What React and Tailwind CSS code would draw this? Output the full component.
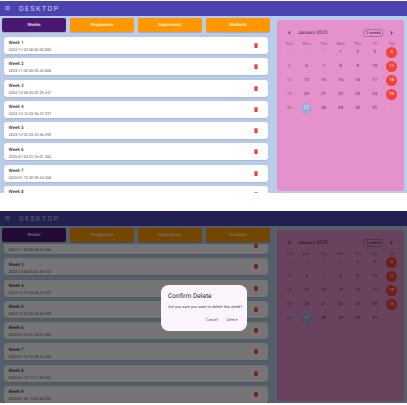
const WEEKS = [
  ["Week 1", "2024-11-23 00:00:00.000"],
  ["Week 2", "2024-11-30 00:55:44.806"],
  ["Week 3", "2024-12-08 05:03:29.447"],
  ["Week 4", "2024-12-15 03:36:47.337"],
  ["Week 5", "2024-12-22 03:25:56.592"],
  ["Week 6", "2025-01-04 01:34:01.584"],
  ["Week 7", "2025-01-13 20:39:44.268"],
  ["Week 8", "2025-01-19 17:11:56.951"],
  ["Week 9", "2025-01-26 19:02:28.322"],
];
const TABS = ["Weeks", "Programme", "Supervisors", "Students"];
const DAY_NAMES = ["Sun", "Mon", "Tue", "Wed", "Thu", "Fri", "Sat"];
const DAYS = [29, 30, 31, ...Array.from({ length: 31 }, (_, i) => i + 1), 1];

function Trash() {
  return (
    <svg viewBox="5 3 14 18" className="h-[5px] w-[4px] shrink-0 fill-[#f44336]">
      <path d="M6 19c0 1.1.9 2 2 2h8c1.100 0 2-.9 2-2V7H6v12zM19 4h-3.500l-1-1h-5l-1 1H5v2h14V4z" />
    </svg>
  );
}

function Chevron({ right }) {
  return (
    <svg viewBox="6 5 12 14" className={`h-[3.500px] w-[3px] fill-[#30202d] ${right ? "rotate-180" : ""}`}>
      <path d="M15.410 7.410 14 6l-6 6 6 6 1.410-1.410L10.830 12z" stroke="#30202d" />
    </svg>
  );
}

function Day({ value, index }) {
  const col = index % 7;
  const outside = index < 3 || index > 33;
  let tone = "text-[#4f3549]";
  if (outside) tone = "text-[#cf8cbf]";
  else if (col === 6) tone = "bg-[#f44336] text-white/90";
  else if (value === 27) tone = "bg-[#9fa8da] text-white text-[5px]";
  else if (col === 0) tone = "text-[#8d6083]";
  return (
    <div className="flex h-[13.850px] items-center justify-center">
      <span className={`flex size-[11px] items-center justify-center rounded-full pt-[1.500px] ${tone}`}>{value}</span>
    </div>
  );
}

function Calendar() {
  return (
    <section className="h-[171px] w-[127.500px] shrink-0 rounded-[2.500px] bg-[#e591cc] px-[4px] pt-[8px]">
      <div className="flex h-[10px] items-center pl-[7px] pr-[7px] text-[#3d2a39]">
        <Chevron />
        <span className="ml-[7px] flex-1 pt-[1.500px] text-[4.850px]">January 2025</span>
        <span className="mr-[7px] flex h-[8px] w-[20px] items-center justify-center rounded-[2.500px] border border-[#a56f96] pt-[0.500px] text-[4px]">
          2 weeks
        </span>
        <Chevron right />
      </div>
      <div className="mt-[3px] grid h-[7px] grid-cols-7 items-center pt-[1px] text-center text-[4.100px] text-[#8a5c7f]">
        {DAY_NAMES.map((d) => (
          <span key={d}>{d}</span>
        ))}
      </div>
      <div className="-mt-[2px] grid grid-cols-7 text-[4.400px]">
        {DAYS.map((d, i) => (
          <Day key={i} value={d} index={i} />
        ))}
      </div>
    </section>
  );
}

function Dialog() {
  return (
    <div className="absolute inset-0 bg-black/54">
      <div className="absolute left-[161px] top-[74px] flex h-[46px] w-[86px] flex-col rounded-[7.500px] bg-[#fdf5fe] px-[7px] pt-[7px]">
        <h2 className="text-[6.600px] leading-[9px] text-[#2b282e]">Confirm Delete</h2>
        <p className="mt-[3px] whitespace-nowrap text-[3.940px] leading-[6px] text-[#4a4450]">
          Are you sure you want to delete this week?
        </p>
        <div className="mt-[7px] flex justify-end gap-[8.500px] pr-[2.500px] text-[3.950px] leading-[5px] text-[#6750a4]">
          <span>Cancel</span>
          <span>Delete</span>
        </div>
      </div>
    </div>
  );
}

function Screen({ scrolled = false }) {
  return (
    <div className="relative flex h-[192px] w-[407px] flex-col overflow-hidden bg-[#b9cce9]">
      <header className="flex h-[14.700px] shrink-0 items-center bg-[#4b44b0] pl-[5px] text-[#d6d4f2]">
        <svg viewBox="0 0 6 5" className="h-[4px] w-[5px]">
          <path d="M0 .5h6M0 2.500h6M0 4.500h6" stroke="currentColor" strokeWidth=".8" />
        </svg>
        <h1 className="ml-[9px] pt-[1.500px] text-[7px] leading-[13px] tracking-[1.450px]">DESKTOP</h1>
      </header>
      <div className="flex flex-1 overflow-hidden">
        <main className="flex w-[272px] shrink-0 flex-col">
          <nav className="flex gap-[4px] pl-[2px] pr-[2px] pt-[2.300px]">
            {TABS.map((t, i) => (
              <span
                key={t}
                className={`flex h-[14.500px] flex-1 items-center justify-center rounded-[2px] pt-[1.500px] text-[4.350px] font-bold text-white/80 shadow-[0_0.500px_1px_rgba(0,0,0,0.15)] ${i === 0 ? "bg-[#4a1871]" : "bg-[#ff9800]"}`}
              >
                {t}
              </span>
            ))}
          </nav>
          <div className="mt-[2px] flex-1 overflow-hidden">
            <div
              className={`flex flex-col gap-[4.270px] pl-[4px] pr-[4px] ${scrolled ? "-mt-[28.700px]" : "pt-[2.500px]"}`}
            >
              {WEEKS.map(([name, date]) => (
                <article
                  key={name}
                  className="flex h-[17px] shrink-0 items-center justify-between rounded-[3px] bg-white pl-[4.600px] pr-[9.700px] shadow-[0_0.500px_1.500px_rgba(0,0,0,0.1)]"
                >
                  <div className="pt-[2.400px]">
                    <div className="text-[4.600px] font-medium leading-[6px] text-[#404040]">{name}</div>
                    <div className="text-[3.850px] leading-[5px] text-[#555555]">{date}</div>
                  </div>
                  <Trash />
                </article>
              ))}
            </div>
          </div>
        </main>
        <div className="pl-[4.800px] pt-[4.300px]">
          <Calendar />
        </div>
      </div>
      {scrolled && <Dialog />}
    </div>
  );
}

export default function App() {
  return (
    <div className="flex h-[405px] w-[407px] flex-col gap-[18px] overflow-hidden bg-white pt-px font-['Roboto',sans-serif] [text-rendering:geometricPrecision]">
      <Screen />
      <Screen scrolled />
    </div>
  );
}
